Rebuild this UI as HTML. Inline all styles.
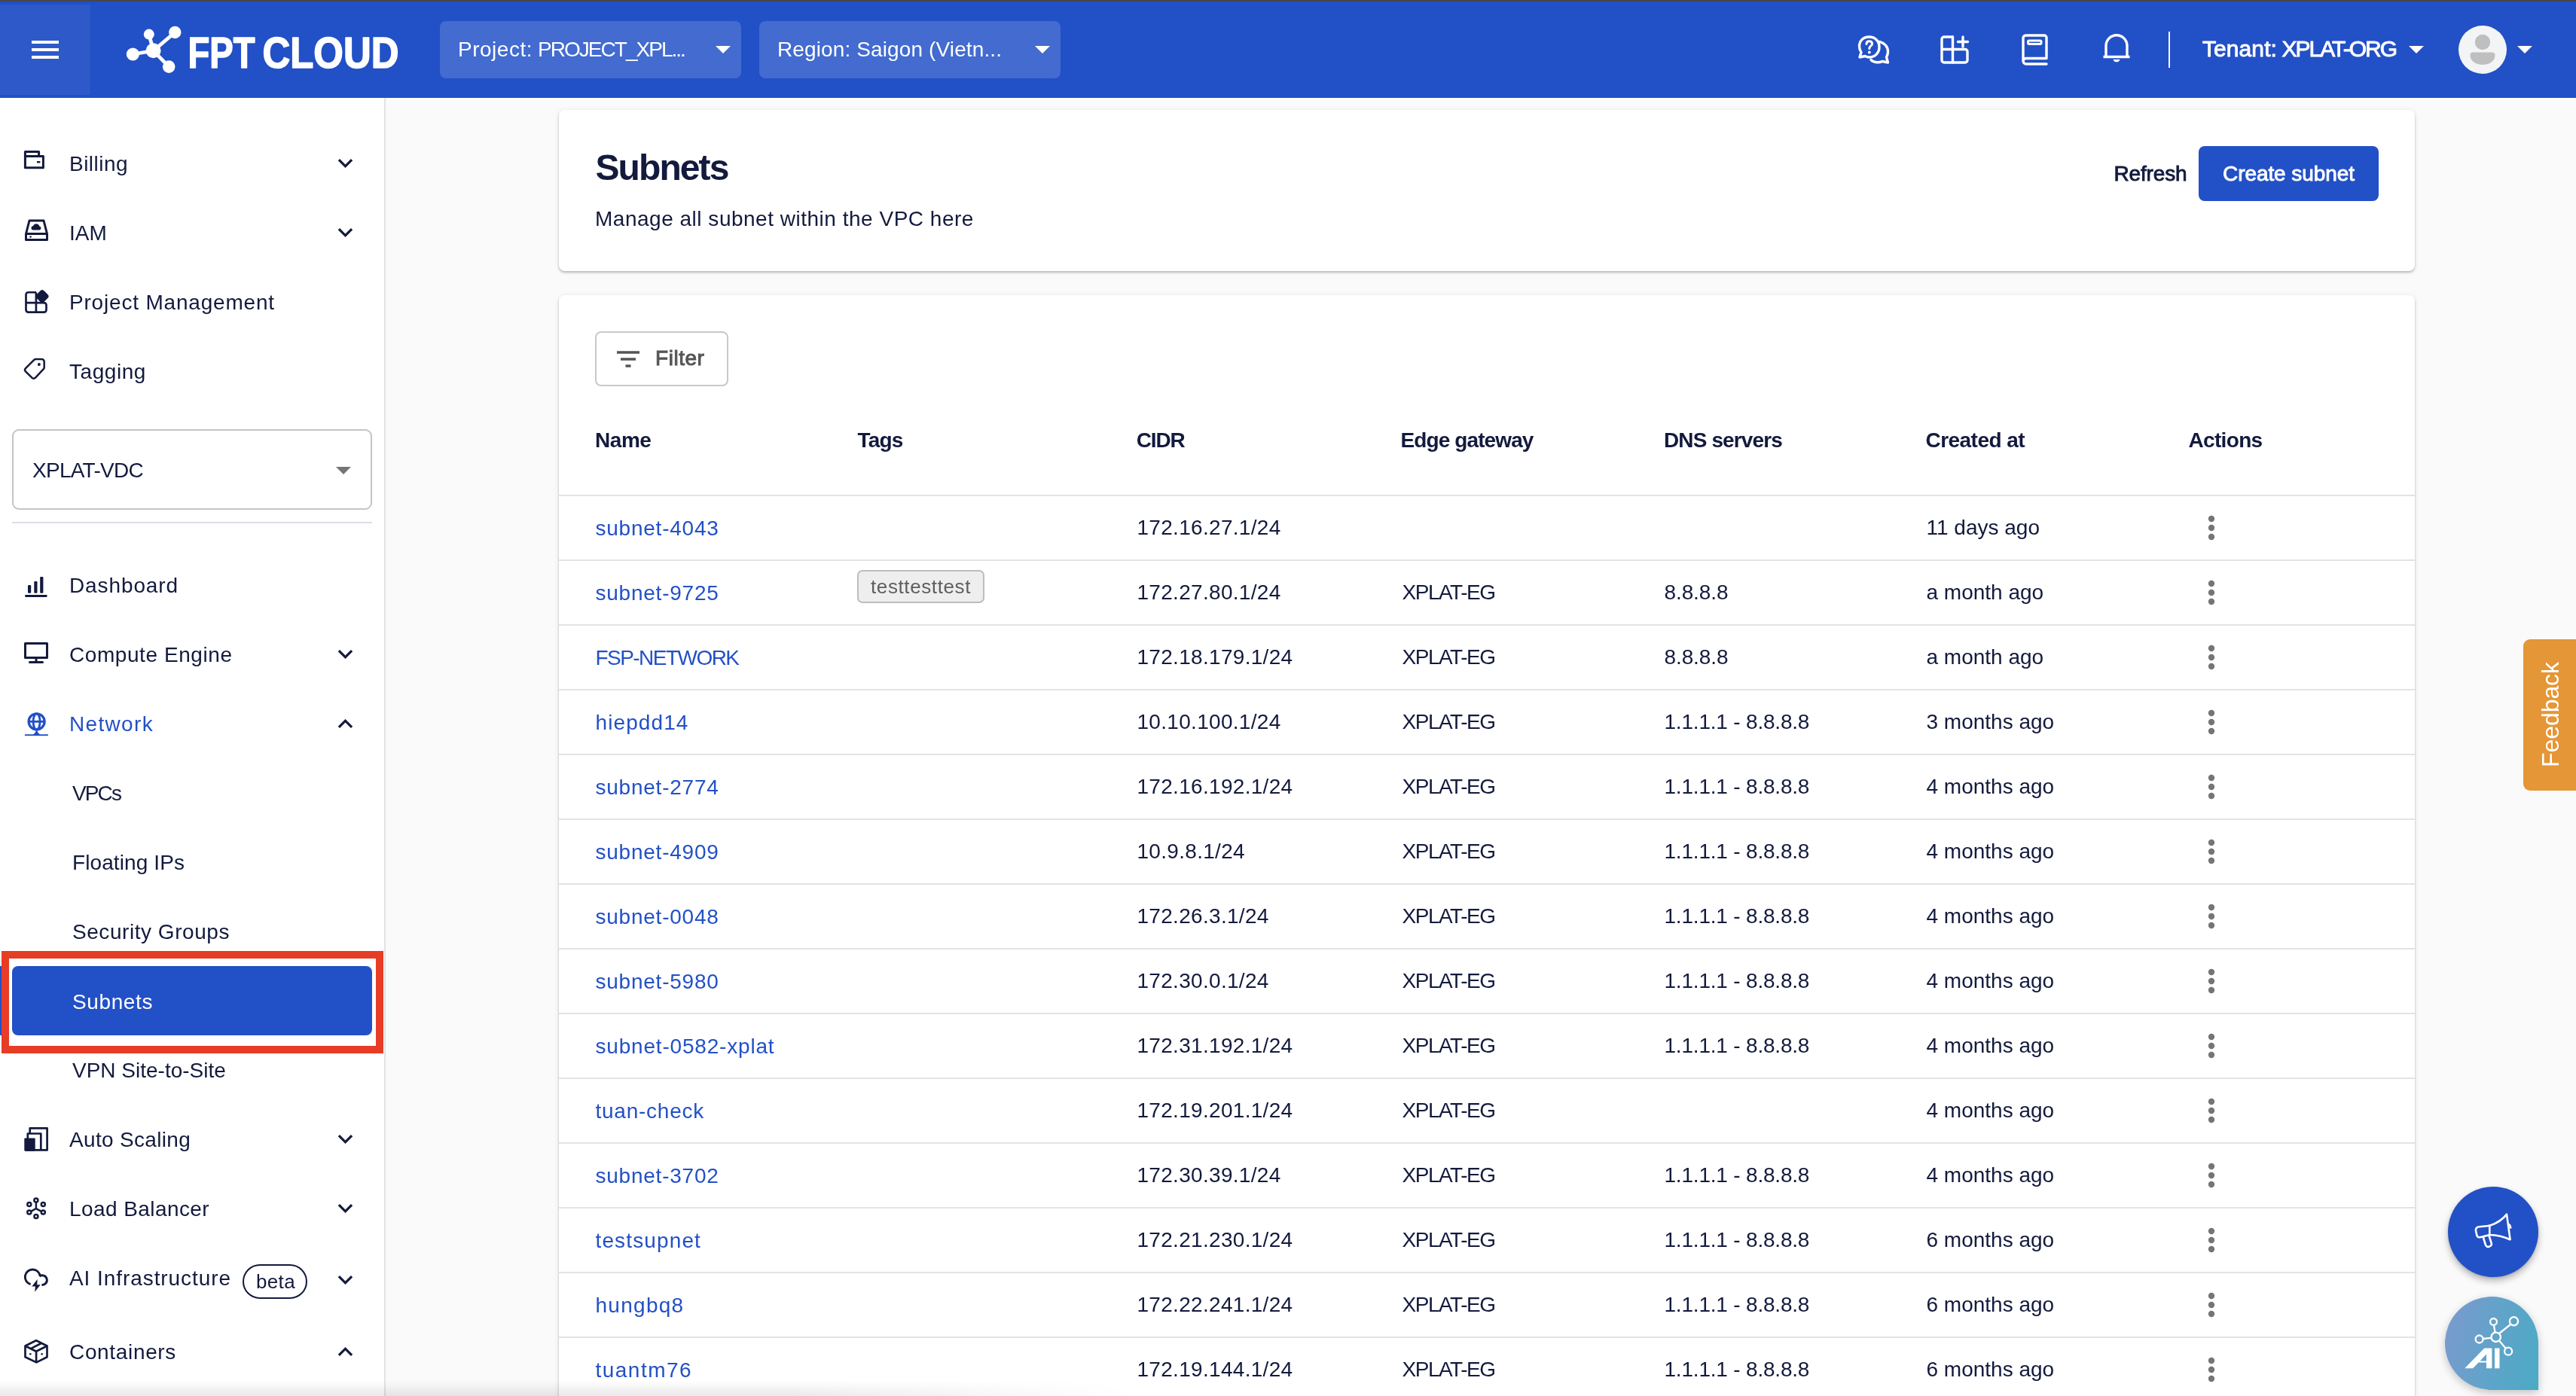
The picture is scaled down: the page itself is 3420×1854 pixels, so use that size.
<!DOCTYPE html>
<html lang="en">
<head>
<meta charset="utf-8">
<title>Subnets - FPT Cloud</title>
<style>
html,body{margin:0;padding:0}
body{width:3420px;height:1854px;overflow:hidden;position:relative;background:#fafafa;font-family:"Liberation Sans",sans-serif;color:#131a3d}
#app{position:absolute;left:0;top:0;width:3420px;height:1854px;overflow:hidden;will-change:transform}
.a{position:absolute}
.t{position:absolute;white-space:nowrap;line-height:40px;height:40px;font-size:28px}
svg{position:absolute;overflow:visible}
#strip{left:0;top:0;width:3420px;height:2px;background:#46474b}
#hdr{left:0;top:2px;width:3420px;height:128px;background:#2250c6}
#burger{left:0;top:6px;width:120px;height:120px;background:#2e59c9}
.hsel{top:28px;width:400px;height:76px;border-radius:8px;background:#436bd0}
.tri{position:absolute;width:0;height:0;border-left:10px solid transparent;border-right:10px solid transparent;border-top:10.5px solid #fff}
#side{left:0;top:130px;width:510px;height:1724px;background:#fff;border-right:2px solid #e2e2e2}
.card{background:#fff;border-radius:8px;box-shadow:0 2px 3px rgba(0,0,0,.22),0 1px 6px rgba(0,0,0,.10)}
.hl{left:742px;width:2464px;height:2px;background:#e3e3e3}
</style>
</head>
<body>
<div id="app">
<!-- HEADER -->
<div class="a" id="hdr"></div><div class="a" id="strip"></div>
<div class="a" id="burger"><div class="a" style="left:42px;top:48px;width:36px;height:4px;background:#fff"></div><div class="a" style="left:42px;top:58px;width:36px;height:4px;background:#fff"></div><div class="a" style="left:42px;top:68px;width:36px;height:4px;background:#fff"></div></div>
<svg style="left:160px;top:30px" width="90" height="72" viewBox="160 30 90 72">
<g stroke="#fff" stroke-width="4.8" stroke-linecap="round"><path d="M203.6 67.4 L232.3 43"/><path d="M203.6 67.4 L197.8 45.6"/><path d="M203.6 67.4 L176.4 72"/><path d="M203.6 67.4 L224.2 88.6"/></g>
<g fill="#fff"><circle cx="203.6" cy="67.2" r="10"/><circle cx="232.3" cy="43" r="8.2"/><circle cx="197.8" cy="45.6" r="7"/><circle cx="176.4" cy="72" r="8.6"/><circle cx="224.2" cy="88.6" r="8.3"/></g></svg>
<svg style="left:240px;top:30px" width="300" height="80" viewBox="240 30 300 80"><g font-family="Liberation Sans, sans-serif" font-weight="700" font-size="57.5" fill="#fff" stroke="#fff" stroke-width="1.6" stroke-linejoin="round"><text x="249.5" y="90" textLength="89" lengthAdjust="spacingAndGlyphs">FPT</text><text x="348.5" y="90" textLength="181" lengthAdjust="spacingAndGlyphs">CLOUD</text></g></svg>
<div class="a hsel" style="left:584px"></div><div class="tri" style="left:950px;top:61px"></div>
<div class="a hsel" style="left:1008px"></div><div class="tri" style="left:1374px;top:61px"></div>
<div class="t" style="left:608px;top:46px;color:#fff;letter-spacing:0.51px;">Project:</div>
<div class="t" style="left:714px;top:46px;color:#fff;letter-spacing:-1.97px;">PROJECT_XPL...</div>
<div class="t" style="left:1032px;top:46px;color:#fff;letter-spacing:0.12px;">Region: Saigon (Vietn...</div>
<svg style="left:2466px;top:46px" width="44" height="40" viewBox="0 0 44 40" fill="none" stroke="#fff" stroke-width="3.4" stroke-linecap="round" stroke-linejoin="round">
<path d="M29.5 9.5 C36 11 40.5 16 40.5 22.5 C40.5 25.5 39.5 28 38.5 30 L40.5 37 L33 35.5 C29 37.5 22 37.5 18 33.5"/>
<path d="M15.5 3 C7.5 3 2.5 8.5 2.5 15.5 C2.5 18.5 3.5 21 5 23.5 L3 30 L10 28.5 C12 29.5 13.5 30 15.5 30 C23.5 30 29 24 29 16.5 C29 8.5 23.5 3 15.5 3 Z" fill="#2250c6"/>
<path d="M12 12.5 C12 10 13.5 8.8 15.7 8.8 C18 8.8 19.5 10.2 19.5 12.2 C19.5 15 15.8 15 15.8 18.5" stroke-width="3"/><circle cx="15.8" cy="23.5" r="1.9" fill="#fff" stroke="none"/></svg>
<svg style="left:2576px;top:47px" width="38" height="38" viewBox="0 0 38 38" fill="none" stroke="#fff" stroke-width="3.4" stroke-linecap="round" stroke-linejoin="round">
<path d="M16.5 2 H5 a3 3 0 0 0 -3 3 V33 a3 3 0 0 0 3 3 H33 a3 3 0 0 0 3 -3 V21.5 a3 3 0 0 0 -3 -3 H2"/>
<path d="M16.5 2 V36"/><path d="M30 2 V15 M23.5 8.5 H36.5"/></svg>
<svg style="left:2684px;top:45px" width="36" height="42" viewBox="0 0 36 42" fill="none" stroke="#fff" stroke-width="3.4" stroke-linecap="round" stroke-linejoin="round">
<path d="M33 32.5 V5 a3 3 0 0 0 -3 -3 H5.5 a3.5 3.5 0 0 0 -3.5 3.5 V36 a4 4 0 0 0 4 4 H33 M2 36 a4 4 0 0 1 4 -3.5 H33"/>
<rect x="8.5" y="9" width="17.5" height="4.5" rx="1.5" stroke-width="3"/></svg>
<svg style="left:2790px;top:44px" width="40" height="40" viewBox="0 0 40 40" fill="none" stroke="#fff" stroke-width="3.4" stroke-linecap="round" stroke-linejoin="round">
<path d="M6 31.5 V16.8 a14 14 0 0 1 28 0 V31.5"/><path d="M2.5 31.5 H37.5" stroke-linecap="butt"/>
<path d="M15.5 35 a4.7 4.7 0 0 0 9 0 Z" fill="#fff" stroke="none"/></svg>
<div class="a" style="left:2879px;top:42px;width:2px;height:48px;background:#fff"></div>
<div class="t" style="left:2924px;top:45px;font-size:30px;color:#fff;letter-spacing:0.08px;-webkit-text-stroke:0.9px #fff;">Tenant:</div>
<div class="t" style="left:3029.5px;top:45px;font-size:30px;color:#fff;letter-spacing:-2.00px;-webkit-text-stroke:0.9px #fff;">XPLAT-ORG</div>
<div class="tri" style="left:3198px;top:61px"></div>
<svg style="left:3264px;top:34px" width="64" height="64" viewBox="0 0 64 64"><circle cx="32" cy="32" r="32" fill="#f3f4f6"/><circle cx="32" cy="22" r="10.2" fill="#bfbfbf"/><path d="M15.5 39.5 a4 4 0 0 1 4 -4 H44.5 a4 4 0 0 1 4 4 C48.5 47 41 52 32 52 C23 52 15.5 47 15.5 39.5 Z" fill="#bfbfbf"/></svg>
<div class="tri" style="left:3342px;top:61px"></div>
<!-- SIDEBAR -->
<div class="a" id="side"></div>
<div class="t" style="left:92px;top:197.5px;letter-spacing:0.47px;">Billing</div>
<svg style="left:438.5px;top:196.9px" width="39" height="39" viewBox="0 0 24 24" fill="#131a3d"><path d="M16.59 8.59L12 13.17 7.41 8.59 6 10l6 6 6-6z"/></svg>
<div class="t" style="left:92px;top:289.5px;">IAM</div>
<svg style="left:438.5px;top:288.9px" width="39" height="39" viewBox="0 0 24 24" fill="#131a3d"><path d="M16.59 8.59L12 13.17 7.41 8.59 6 10l6 6 6-6z"/></svg>
<div class="t" style="left:92px;top:381.5px;letter-spacing:0.81px;">Project Management</div>
<div class="t" style="left:92px;top:473.5px;letter-spacing:0.56px;">Tagging</div>
<div class="t" style="left:92px;top:758px;letter-spacing:0.89px;">Dashboard</div>
<div class="t" style="left:92px;top:850px;letter-spacing:0.57px;">Compute Engine</div>
<svg style="left:438.5px;top:849.4px" width="39" height="39" viewBox="0 0 24 24" fill="#131a3d"><path d="M16.59 8.59L12 13.17 7.41 8.59 6 10l6 6 6-6z"/></svg>
<div class="t" style="left:92px;top:942px;color:#2250c6;letter-spacing:1.33px;">Network</div>
<svg style="left:438.5px;top:941.5px" width="39" height="39" viewBox="0 0 24 24" fill="#131a3d"><path d="M12 8l-6 6 1.41 1.41L12 10.83l4.59 4.58L18 14z"/></svg>
<div class="t" style="left:96px;top:1034px;letter-spacing:-1.89px;">VPCs</div>
<div class="t" style="left:96px;top:1126px;letter-spacing:0.10px;">Floating IPs</div>
<div class="t" style="left:96px;top:1218px;letter-spacing:0.55px;">Security Groups</div>
<div class="t" style="left:96px;top:1402px;">VPN Site-to-Site</div>
<div class="t" style="left:92px;top:1494px;letter-spacing:0.32px;">Auto Scaling</div>
<svg style="left:438.5px;top:1493.4px" width="39" height="39" viewBox="0 0 24 24" fill="#131a3d"><path d="M16.59 8.59L12 13.17 7.41 8.59 6 10l6 6 6-6z"/></svg>
<div class="t" style="left:92px;top:1586px;letter-spacing:0.42px;">Load Balancer</div>
<svg style="left:438.5px;top:1585.4px" width="39" height="39" viewBox="0 0 24 24" fill="#131a3d"><path d="M16.59 8.59L12 13.17 7.41 8.59 6 10l6 6 6-6z"/></svg>
<div class="t" style="left:92px;top:1678px;letter-spacing:0.93px;">AI Infrastructure</div>
<svg style="left:438.5px;top:1680.4px" width="39" height="39" viewBox="0 0 24 24" fill="#131a3d"><path d="M16.59 8.59L12 13.17 7.41 8.59 6 10l6 6 6-6z"/></svg>
<div class="t" style="left:92px;top:1776px;letter-spacing:0.66px;">Containers</div>
<svg style="left:438.5px;top:1775.5px" width="39" height="39" viewBox="0 0 24 24" fill="#131a3d"><path d="M12 8l-6 6 1.41 1.41L12 10.83l4.59 4.58L18 14z"/></svg>
<div class="a" style="left:16px;top:570px;width:474px;height:103px;border:2px solid #c4c4c4;border-radius:9px;background:#fff"></div>
<div class="t" style="left:43px;top:604.5px;letter-spacing:-0.73px;">XPLAT-VDC</div>
<div class="tri" style="left:446px;top:620px;border-top-color:#757575"></div>
<div class="a" style="left:16px;top:693px;width:478px;height:2px;background:#dcdee8"></div>
<div class="a" style="left:2px;top:1263px;width:487px;height:116px;border:10px solid #e73c25"></div>
<div class="a" style="left:0;top:1283px;width:2px;height:92px;background:#2250c6"></div>
<div class="a" style="left:16px;top:1283px;width:478px;height:92px;border-radius:8px;background:#2250c6"></div>
<div class="t" style="left:96px;top:1311px;color:#fff;letter-spacing:0.61px;">Subnets</div>
<div class="a" style="left:322px;top:1679px;width:82px;height:42px;border:2px solid #131a3d;border-radius:23px"></div>
<div class="t" style="left:340px;top:1682px;font-size:26px;letter-spacing:0.35px;">beta</div>
<svg style="left:32px;top:200px" width="28" height="26" viewBox="0 0 28 26" fill="none" stroke="#131a3d" stroke-width="3" stroke-linejoin="round" stroke-width="2.7"><path d="M1.4 7.4 H25.4 V22.8 H1.4 Z"/><path d="M1.4 7.4 V1.5 H19.6 V7.4"/><path d="M17 15.2 H21.4" stroke-width="2.4"/></svg>
<svg style="left:32px;top:291px" width="33" height="30" viewBox="0 0 33 30" fill="none" stroke="#131a3d" stroke-width="3" stroke-linejoin="round"><path d="M7 2 H26 L30.5 19.5 V27.5 H2.5 V19.5 Z"/><path d="M2.5 19.5 H30.5"/><circle cx="8.5" cy="23.5" r="1.3" fill="#131a3d" stroke="none"/><path d="M11.5 14.5 a2.8 2.8 0 0 1 0.6-5.5 a4.3 4.3 0 0 1 8.2 0.4 a2.6 2.6 0 0 1 0.2 5.1 Z" fill="#131a3d" stroke="none"/></svg>
<svg style="left:33px;top:385px" width="32" height="31" viewBox="0 0 32 31" fill="none" stroke="#131a3d" stroke-width="2.7"><path d="M15 3.25 H4.5 a3 3 0 0 0 -3 3 V26.6 a3 3 0 0 0 3 3 H25.5 a3 3 0 0 0 3 -3 V20.1 a3 3 0 0 0 -3 -3 H1.5"/><path d="M14.9 3.25 V29.6"/><rect x="-6.7" y="-6.7" width="13.4" height="13.4" rx="3.2" transform="translate(23 8.5) rotate(45)" fill="#131a3d" stroke="#131a3d" stroke-width="0.6"/></svg>
<svg style="left:32px;top:476px" width="29" height="29" viewBox="0 0 29 29" fill="none" stroke="#131a3d" stroke-width="2.5"><path d="M15.5 0.9 H23.2 a3.5 3.5 0 0 1 3.5 3.5 V12 a3 3 0 0 1 -0.9 2.1 L15 25.6 a3.2 3.2 0 0 1 -4.6 0.1 L2 17.3 a3 3 0 0 1 0 -4.2 L13.3 1.9 a3 3 0 0 1 2.2 -1 Z"/><circle cx="19.9" cy="7.9" r="2" fill="#131a3d" stroke="none"/></svg>
<svg style="left:33px;top:765px" width="30" height="29" viewBox="0 0 30 29" fill="#131a3d"><rect x="4" y="12" width="4.2" height="10.7" rx="1.3"/><rect x="12.3" y="7" width="4.2" height="15.7" rx="1.3"/><rect x="20.2" y="1" width="4.2" height="21.7" rx="1.3"/><rect x="0" y="25.1" width="29.7" height="2.9" rx="1.4"/></svg>
<svg style="left:32px;top:853px" width="32" height="30" viewBox="0 0 32 30" fill="none" stroke="#131a3d" stroke-width="3" stroke-linejoin="round"><rect x="1.5" y="1.5" width="29" height="19"/><path d="M16 20.5 V26.5"/><path d="M7.5 26.5 H24.5" stroke-linecap="round"/></svg>
<svg style="left:32px;top:944px" width="33" height="34" viewBox="0 0 33 34" fill="none" stroke="#2250c6" stroke-width="3.3"><circle cx="16.6" cy="14.3" r="10.5"/><ellipse cx="16.6" cy="14.3" rx="4.5" ry="10.5" stroke-width="2.8"/><path d="M6 14.3 H27.2" stroke-width="2.8"/><path d="M16.6 26.5 C16 29 14.5 31 12.6 32.2 H20.6 C18.7 31 17.2 29 16.6 26.5 Z" stroke-width="1.6" stroke-linejoin="round" fill="#2250c6"/><path d="M0.9 32.2 H31.8" stroke-width="1.9"/></svg>
<svg style="left:32px;top:1497px" width="33" height="33" viewBox="0 0 33 33" fill="none" stroke="#131a3d" stroke-width="2.7" stroke-linejoin="round"><path d="M7.7 8 V1.4 H30.6 V30.4 H2"/><path d="M4.8 15 V8.5 H22.3 V30.4"/><rect x="0.3" y="14.4" width="14.4" height="17.3" rx="1.2" fill="#131a3d" stroke="none"/></svg>
<svg style="left:34px;top:1590px" width="29" height="31" viewBox="0 0 29 31" fill="none" stroke="#131a3d" stroke-width="2.5"><path d="M13.9 6.8 V15.1 L7 18.9 M13.9 15.1 L21 18.9" stroke-width="2.4"/><circle cx="13.9" cy="4.1" r="2.5"/><circle cx="13.9" cy="25.6" r="2.5"/><circle cx="4.8" cy="9.6" r="2.5"/><circle cx="23.3" cy="9.6" r="2.5"/><circle cx="4.8" cy="20.1" r="2.5"/><circle cx="23.3" cy="20.1" r="2.5"/></svg>
<svg style="left:32px;top:1684px" width="33" height="33" viewBox="0 0 33 33" fill="none" stroke="#131a3d" stroke-width="2.9"><path d="M8.6 21.6 A10 10 0 1 1 21.2 10.8"/><path d="M20.4 11 A6.3 6.3 0 1 1 23.4 22.4"/><path d="M17.6 15 L10.3 24.5 H14.9 L14.2 31.8 L21.7 22.2 H17.3 Z" fill="#131a3d" stroke="none"/></svg>
<svg style="left:32px;top:1778px" width="33" height="34" viewBox="0 0 33 34" fill="none" stroke="#131a3d" stroke-width="2.7" stroke-linejoin="round"><path d="M16 2.2 L30.5 9.5 V24.2 L16.3 31.4 L1.5 24.2 V9.5 Z"/><path d="M1.5 9.5 L16 16.7 L30.5 9.5 M16.1 16.7 V31.4 M8.8 13.1 L23.2 5.8"/><circle cx="8.3" cy="20.3" r="1.3" fill="#131a3d" stroke="none"/><circle cx="23.7" cy="20.3" r="1.3" fill="#131a3d" stroke="none"/></svg>
<!-- MAIN -->
<div class="a card" style="left:742px;top:146px;width:2464px;height:214px"></div>
<div class="t" style="left:790.5px;top:196.5px;font-size:48px;font-weight:700;line-height:52px;height:52px;letter-spacing:-1.91px;">Subnets</div>
<div class="t" style="left:790px;top:271px;letter-spacing:0.51px;">Manage all subnet within the VPC here</div>
<div class="t" style="left:2806.5px;top:211px;letter-spacing:-0.15px;-webkit-text-stroke:0.9px;">Refresh</div>
<div class="a" style="left:2919px;top:194px;width:239px;height:73px;border-radius:8px;background:#2250c6"></div>
<div class="t" style="left:2951px;top:211px;color:#fff;letter-spacing:-0.07px;-webkit-text-stroke:0.9px #fff;">Create subnet</div>
<div class="a card" style="left:742px;top:392px;width:2464px;height:1500px"></div>
<div class="a" style="left:790px;top:440px;width:173px;height:69px;border:2px solid #c9c9c9;border-radius:8px;background:#fff"></div>
<svg style="left:819px;top:466px" width="30" height="22" viewBox="0 0 30 22"><path d="M0 2H30M5 11H25M11.5 20H18.5" stroke="#555" stroke-width="3.4" fill="none"/></svg>
<div class="t" style="left:870px;top:456px;color:#555;letter-spacing:0.54px;-webkit-text-stroke:1px #555;">Filter</div>
<div class="t" style="left:790px;top:564.5px;font-weight:700;letter-spacing:-0.44px;">Name</div>
<div class="t" style="left:1138.5px;top:564.5px;font-weight:700;letter-spacing:-0.82px;">Tags</div>
<div class="t" style="left:1508.7px;top:564.5px;font-weight:700;letter-spacing:-1.11px;">CIDR</div>
<div class="t" style="left:1859.5px;top:564.5px;font-weight:700;letter-spacing:-0.89px;">Edge gateway</div>
<div class="t" style="left:2209px;top:564.5px;font-weight:700;letter-spacing:-0.87px;">DNS servers</div>
<div class="t" style="left:2556.5px;top:564.5px;font-weight:700;letter-spacing:-0.54px;">Created at</div>
<div class="t" style="left:2905.5px;top:564.5px;font-weight:700;letter-spacing:-0.67px;">Actions</div>
<div class="a hl" style="top:657px"></div>
<div class="t" style="left:790.5px;top:682px;color:#2250c6;letter-spacing:0.76px;">subnet-4043</div>
<div class="t" style="left:1509.5px;top:681px;letter-spacing:0.30px;">172.16.27.1/24</div>
<div class="t" style="left:2557.5px;top:681px;">11 days ago</div>
<svg style="left:2912px;top:677px" width="48" height="48" viewBox="0 0 48 48" fill="#757575"><circle cx="24" cy="12" r="4.2"/><circle cx="24" cy="24" r="4.2"/><circle cx="24" cy="36" r="4.2"/></svg>
<div class="a hl" style="top:743px"></div>
<div class="t" style="left:790.5px;top:768px;color:#2250c6;letter-spacing:0.76px;">subnet-9725</div>
<div class="a" style="left:1138px;top:757px;width:165px;height:40px;border:2px solid #bdbdbd;border-radius:7px;background:#eeeeee"></div>
<div class="t" style="left:1156px;top:759px;font-size:26px;color:#5f5f5f;letter-spacing:0.61px;">testtesttest</div>
<div class="t" style="left:1509.5px;top:767px;letter-spacing:0.30px;">172.27.80.1/24</div>
<div class="t" style="left:1861.5px;top:767px;letter-spacing:-1.48px;">XPLAT-EG</div>
<div class="t" style="left:2209.5px;top:767px;letter-spacing:-0.10px;">8.8.8.8</div>
<div class="t" style="left:2557.5px;top:767px;">a month ago</div>
<svg style="left:2912px;top:763px" width="48" height="48" viewBox="0 0 48 48" fill="#757575"><circle cx="24" cy="12" r="4.2"/><circle cx="24" cy="24" r="4.2"/><circle cx="24" cy="36" r="4.2"/></svg>
<div class="a hl" style="top:829px"></div>
<div class="t" style="left:790.5px;top:854px;color:#2250c6;letter-spacing:-1.54px;">FSP-NETWORK</div>
<div class="t" style="left:1509.5px;top:853px;letter-spacing:0.30px;">172.18.179.1/24</div>
<div class="t" style="left:1861.5px;top:853px;letter-spacing:-1.48px;">XPLAT-EG</div>
<div class="t" style="left:2209.5px;top:853px;letter-spacing:-0.10px;">8.8.8.8</div>
<div class="t" style="left:2557.5px;top:853px;">a month ago</div>
<svg style="left:2912px;top:849px" width="48" height="48" viewBox="0 0 48 48" fill="#757575"><circle cx="24" cy="12" r="4.2"/><circle cx="24" cy="24" r="4.2"/><circle cx="24" cy="36" r="4.2"/></svg>
<div class="a hl" style="top:915px"></div>
<div class="t" style="left:790.5px;top:940px;color:#2250c6;letter-spacing:1.10px;">hiepdd14</div>
<div class="t" style="left:1509.5px;top:939px;letter-spacing:0.30px;">10.10.100.1/24</div>
<div class="t" style="left:1861.5px;top:939px;letter-spacing:-1.48px;">XPLAT-EG</div>
<div class="t" style="left:2209.5px;top:939px;letter-spacing:-0.20px;">1.1.1.1 - 8.8.8.8</div>
<div class="t" style="left:2557.5px;top:939px;">3 months ago</div>
<svg style="left:2912px;top:935px" width="48" height="48" viewBox="0 0 48 48" fill="#757575"><circle cx="24" cy="12" r="4.2"/><circle cx="24" cy="24" r="4.2"/><circle cx="24" cy="36" r="4.2"/></svg>
<div class="a hl" style="top:1001px"></div>
<div class="t" style="left:790.5px;top:1026px;color:#2250c6;letter-spacing:0.76px;">subnet-2774</div>
<div class="t" style="left:1509.5px;top:1025px;letter-spacing:0.30px;">172.16.192.1/24</div>
<div class="t" style="left:1861.5px;top:1025px;letter-spacing:-1.48px;">XPLAT-EG</div>
<div class="t" style="left:2209.5px;top:1025px;letter-spacing:-0.20px;">1.1.1.1 - 8.8.8.8</div>
<div class="t" style="left:2557.5px;top:1025px;">4 months ago</div>
<svg style="left:2912px;top:1021px" width="48" height="48" viewBox="0 0 48 48" fill="#757575"><circle cx="24" cy="12" r="4.2"/><circle cx="24" cy="24" r="4.2"/><circle cx="24" cy="36" r="4.2"/></svg>
<div class="a hl" style="top:1087px"></div>
<div class="t" style="left:790.5px;top:1112px;color:#2250c6;letter-spacing:0.76px;">subnet-4909</div>
<div class="t" style="left:1509.5px;top:1111px;letter-spacing:0.30px;">10.9.8.1/24</div>
<div class="t" style="left:1861.5px;top:1111px;letter-spacing:-1.48px;">XPLAT-EG</div>
<div class="t" style="left:2209.5px;top:1111px;letter-spacing:-0.20px;">1.1.1.1 - 8.8.8.8</div>
<div class="t" style="left:2557.5px;top:1111px;">4 months ago</div>
<svg style="left:2912px;top:1107px" width="48" height="48" viewBox="0 0 48 48" fill="#757575"><circle cx="24" cy="12" r="4.2"/><circle cx="24" cy="24" r="4.2"/><circle cx="24" cy="36" r="4.2"/></svg>
<div class="a hl" style="top:1173px"></div>
<div class="t" style="left:790.5px;top:1198px;color:#2250c6;letter-spacing:0.76px;">subnet-0048</div>
<div class="t" style="left:1509.5px;top:1197px;letter-spacing:0.30px;">172.26.3.1/24</div>
<div class="t" style="left:1861.5px;top:1197px;letter-spacing:-1.48px;">XPLAT-EG</div>
<div class="t" style="left:2209.5px;top:1197px;letter-spacing:-0.20px;">1.1.1.1 - 8.8.8.8</div>
<div class="t" style="left:2557.5px;top:1197px;">4 months ago</div>
<svg style="left:2912px;top:1193px" width="48" height="48" viewBox="0 0 48 48" fill="#757575"><circle cx="24" cy="12" r="4.2"/><circle cx="24" cy="24" r="4.2"/><circle cx="24" cy="36" r="4.2"/></svg>
<div class="a hl" style="top:1259px"></div>
<div class="t" style="left:790.5px;top:1284px;color:#2250c6;letter-spacing:0.76px;">subnet-5980</div>
<div class="t" style="left:1509.5px;top:1283px;letter-spacing:0.30px;">172.30.0.1/24</div>
<div class="t" style="left:1861.5px;top:1283px;letter-spacing:-1.48px;">XPLAT-EG</div>
<div class="t" style="left:2209.5px;top:1283px;letter-spacing:-0.20px;">1.1.1.1 - 8.8.8.8</div>
<div class="t" style="left:2557.5px;top:1283px;">4 months ago</div>
<svg style="left:2912px;top:1279px" width="48" height="48" viewBox="0 0 48 48" fill="#757575"><circle cx="24" cy="12" r="4.2"/><circle cx="24" cy="24" r="4.2"/><circle cx="24" cy="36" r="4.2"/></svg>
<div class="a hl" style="top:1345px"></div>
<div class="t" style="left:790.5px;top:1370px;color:#2250c6;letter-spacing:0.81px;">subnet-0582-xplat</div>
<div class="t" style="left:1509.5px;top:1369px;letter-spacing:0.30px;">172.31.192.1/24</div>
<div class="t" style="left:1861.5px;top:1369px;letter-spacing:-1.48px;">XPLAT-EG</div>
<div class="t" style="left:2209.5px;top:1369px;letter-spacing:-0.20px;">1.1.1.1 - 8.8.8.8</div>
<div class="t" style="left:2557.5px;top:1369px;">4 months ago</div>
<svg style="left:2912px;top:1365px" width="48" height="48" viewBox="0 0 48 48" fill="#757575"><circle cx="24" cy="12" r="4.2"/><circle cx="24" cy="24" r="4.2"/><circle cx="24" cy="36" r="4.2"/></svg>
<div class="a hl" style="top:1431px"></div>
<div class="t" style="left:790.5px;top:1456px;color:#2250c6;letter-spacing:0.75px;">tuan-check</div>
<div class="t" style="left:1509.5px;top:1455px;letter-spacing:0.30px;">172.19.201.1/24</div>
<div class="t" style="left:1861.5px;top:1455px;letter-spacing:-1.48px;">XPLAT-EG</div>
<div class="t" style="left:2557.5px;top:1455px;">4 months ago</div>
<svg style="left:2912px;top:1451px" width="48" height="48" viewBox="0 0 48 48" fill="#757575"><circle cx="24" cy="12" r="4.2"/><circle cx="24" cy="24" r="4.2"/><circle cx="24" cy="36" r="4.2"/></svg>
<div class="a hl" style="top:1517px"></div>
<div class="t" style="left:790.5px;top:1542px;color:#2250c6;letter-spacing:0.76px;">subnet-3702</div>
<div class="t" style="left:1509.5px;top:1541px;letter-spacing:0.30px;">172.30.39.1/24</div>
<div class="t" style="left:1861.5px;top:1541px;letter-spacing:-1.48px;">XPLAT-EG</div>
<div class="t" style="left:2209.5px;top:1541px;letter-spacing:-0.20px;">1.1.1.1 - 8.8.8.8</div>
<div class="t" style="left:2557.5px;top:1541px;">4 months ago</div>
<svg style="left:2912px;top:1537px" width="48" height="48" viewBox="0 0 48 48" fill="#757575"><circle cx="24" cy="12" r="4.2"/><circle cx="24" cy="24" r="4.2"/><circle cx="24" cy="36" r="4.2"/></svg>
<div class="a hl" style="top:1603px"></div>
<div class="t" style="left:790.5px;top:1628px;color:#2250c6;letter-spacing:1.13px;">testsupnet</div>
<div class="t" style="left:1509.5px;top:1627px;letter-spacing:0.30px;">172.21.230.1/24</div>
<div class="t" style="left:1861.5px;top:1627px;letter-spacing:-1.48px;">XPLAT-EG</div>
<div class="t" style="left:2209.5px;top:1627px;letter-spacing:-0.20px;">1.1.1.1 - 8.8.8.8</div>
<div class="t" style="left:2557.5px;top:1627px;">6 months ago</div>
<svg style="left:2912px;top:1623px" width="48" height="48" viewBox="0 0 48 48" fill="#757575"><circle cx="24" cy="12" r="4.2"/><circle cx="24" cy="24" r="4.2"/><circle cx="24" cy="36" r="4.2"/></svg>
<div class="a hl" style="top:1689px"></div>
<div class="t" style="left:790.5px;top:1714px;color:#2250c6;letter-spacing:1.28px;">hungbq8</div>
<div class="t" style="left:1509.5px;top:1713px;letter-spacing:0.30px;">172.22.241.1/24</div>
<div class="t" style="left:1861.5px;top:1713px;letter-spacing:-1.48px;">XPLAT-EG</div>
<div class="t" style="left:2209.5px;top:1713px;letter-spacing:-0.20px;">1.1.1.1 - 8.8.8.8</div>
<div class="t" style="left:2557.5px;top:1713px;">6 months ago</div>
<svg style="left:2912px;top:1709px" width="48" height="48" viewBox="0 0 48 48" fill="#757575"><circle cx="24" cy="12" r="4.2"/><circle cx="24" cy="24" r="4.2"/><circle cx="24" cy="36" r="4.2"/></svg>
<div class="a hl" style="top:1775px"></div>
<div class="t" style="left:790.5px;top:1800px;color:#2250c6;letter-spacing:1.47px;">tuantm76</div>
<div class="t" style="left:1509.5px;top:1799px;letter-spacing:0.30px;">172.19.144.1/24</div>
<div class="t" style="left:1861.5px;top:1799px;letter-spacing:-1.48px;">XPLAT-EG</div>
<div class="t" style="left:2209.5px;top:1799px;letter-spacing:-0.20px;">1.1.1.1 - 8.8.8.8</div>
<div class="t" style="left:2557.5px;top:1799px;">6 months ago</div>
<svg style="left:2912px;top:1795px" width="48" height="48" viewBox="0 0 48 48" fill="#757575"><circle cx="24" cy="12" r="4.2"/><circle cx="24" cy="24" r="4.2"/><circle cx="24" cy="36" r="4.2"/></svg>
<!-- FLOATERS -->
<div class="a" style="left:3350px;top:849px;width:80px;height:201px;border-radius:9px;background:#e59636"></div>
<div class="t" style="left:3315.5px;top:928.5px;font-size:32px;color:#fff;letter-spacing:-0.07px;transform:rotate(-90deg);transform-origin:center;width:140px;text-align:center;">Feedback</div>
<div class="a" style="left:3250px;top:1576px;width:120px;height:120px;border-radius:60px;background:#2250c6;box-shadow:0 5px 10px rgba(0,0,0,.28),0 1px 3px rgba(0,0,0,.15)"></div>
<svg style="left:3280px;top:1606px" width="60" height="56" viewBox="0 0 60 56" fill="none" stroke="#fff" stroke-width="2.6" stroke-linejoin="round" stroke-linecap="round"><path d="M25.3 21.8 L11.5 23.2 Q6.5 23.8 7 28.5 L8.2 34 Q9 37.8 12.5 37.2 L25.3 34"/><path d="M25.3 21.8 Q40 17 48 6.6 L52.6 40.3 Q40 34.5 25.3 34 Z"/><path d="M16.8 37 L20 47.5 Q21.5 51 25 49.5 Q29 48 27.5 44.5 L24.5 35"/><path d="M51.8 20.5 L53.2 24.5"/></svg>
<div class="a" style="left:3246px;top:1722px;width:124px;height:124px;border-radius:62px 62px 0 62px;background:linear-gradient(105deg,#7d99ce 0%,#62a3c9 50%,#4aabc5 100%);box-shadow:0 4px 12px rgba(0,0,0,.22)"></div>
<svg style="left:3262px;top:1740px" width="92" height="92" viewBox="0 0 92 92" fill="none" stroke="#fff" stroke-width="2.3"><path d="M50.5 29.5 L49 20 M56 31 L71 19 M45.5 36.8 L35 38 M56 40.5 L64.5 50.5"/><circle cx="51.7" cy="35.8" r="6.2"/><circle cx="48.5" cy="15.4" r="4.4"/><circle cx="75.5" cy="14.7" r="5.6"/><circle cx="29.6" cy="38.5" r="5"/><circle cx="68.1" cy="54.7" r="5"/><path d="M10.2 77.3 L36.3 50.5 H46.4 V77.3 H39 V69.6 H28.6 L21.2 77.3 Z M30.6 67.4 H39 V58.5 Z" fill="#fff" stroke="none" fill-rule="evenodd"/><path d="M50 50.5 H56.5 V77.3 H50 Z" fill="#fff" stroke="none"/></svg>
<div class="a" style="left:0;top:1834px;width:1500px;height:20px;background:linear-gradient(to bottom,rgba(0,0,0,0),rgba(0,0,0,.085));-webkit-mask-image:linear-gradient(to right,#000 70%,transparent)"></div>
</div>
</body>
</html>
